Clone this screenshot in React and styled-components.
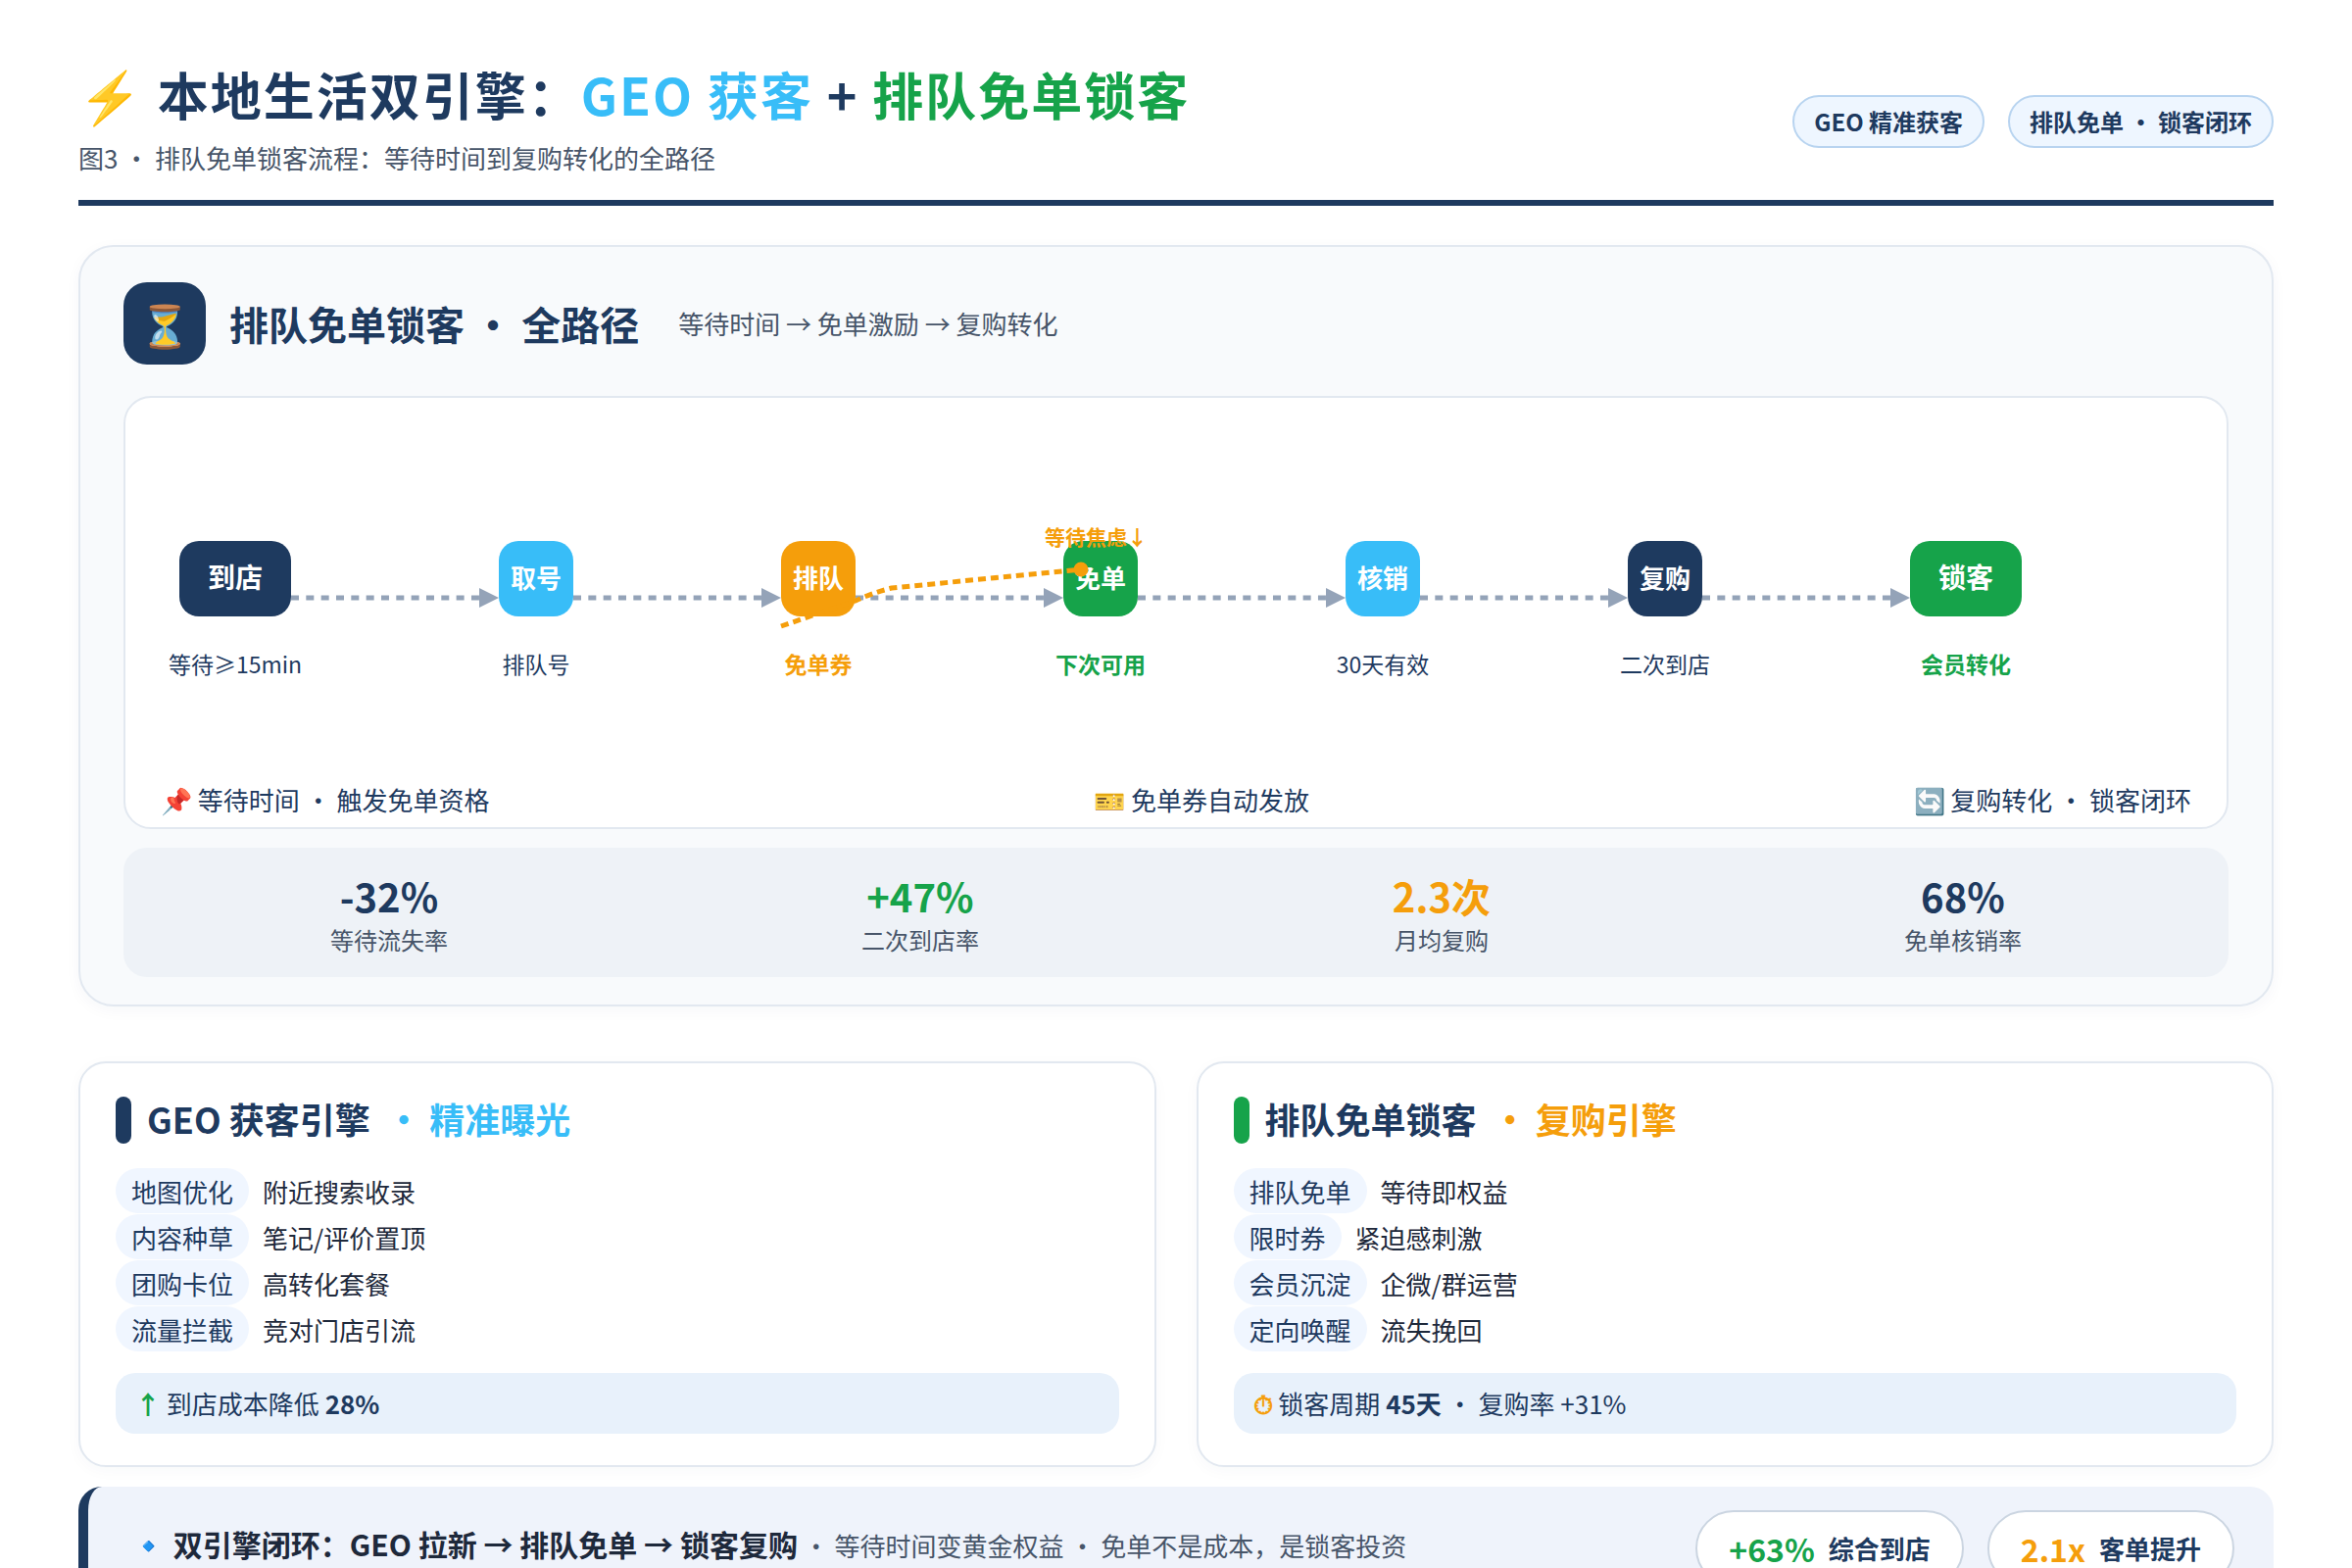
import React from 'react';
import styled, { createGlobalStyle } from 'styled-components';

const NAVY = '#1e3a5f';
const SKY = '#38bdf8';
const GREEN = '#16a34a';
const AMBER = '#f59e0b';
// full-width punctuation
const COLON = '\uFF1A';
const COMMA = '\uFF0C';

const GlobalStyle = createGlobalStyle`
  html, body {
    margin: 0;
    padding: 0;
    background: #ffffff;
  }
  body {
    font-family: "Noto Sans CJK SC", "Noto Sans", sans-serif;
    color: ${NAVY};
  }
  * { box-sizing: border-box; }
`;

const flowSteps = [
  { name: '到店', bg: NAVY, wide: true, note: '等待≥15min' },
  { name: '取号', bg: SKY, note: '排队号' },
  { name: '排队', bg: AMBER, note: '免单券', noteColor: AMBER },
  { name: '免单', bg: GREEN, note: '下次可用', noteColor: GREEN, callout: '等待焦虑↓' },
  { name: '核销', bg: SKY, note: '30天有效' },
  { name: '复购', bg: NAVY, note: '二次到店' },
  { name: '锁客', bg: GREEN, wide: true, note: '会员转化', noteColor: GREEN },
];

const stats = [
  { value: '-32%', label: '等待流失率', color: NAVY },
  { value: '+47%', label: '二次到店率', color: GREEN },
  { value: '2.3次', label: '月均复购', color: AMBER },
  { value: '68%', label: '免单核销率', color: NAVY },
];

const geoRows = [
  ['地图优化', '附近搜索收录'],
  ['内容种草', '笔记/评价置顶'],
  ['团购卡位', '高转化套餐'],
  ['流量拦截', '竞对门店引流'],
];

const lockRows = [
  ['排队免单', '等待即权益'],
  ['限时券', '紧迫感刺激'],
  ['会员沉淀', '企微/群运营'],
  ['定向唤醒', '流失挽回'],
];

const FlowArrow = () => (
  <ArrowSvg viewBox="0 0 212 20" width="212" height="20">
    <line x1="0" y1="10" x2="194" y2="10" stroke="#94a3b8" strokeWidth="5" strokeDasharray="8 7.33" />
    <polygon points="192,0 212,10 192,20" fill="#94a3b8" />
  </ArrowSvg>
);

export default function App() {
  return (
    <Page>
      <GlobalStyle />
      <Header>
        <div>
          <Title>
            <Bolt>⚡</Bolt> 本地生活双引擎{COLON}<Tint $color={SKY}>GEO 获客</Tint> + <Tint $color={GREEN}>排队免单锁客</Tint>
          </Title>
          <Subtitle>图3 · 排队免单锁客流程{COLON}等待时间到复购转化的全路径</Subtitle>
        </div>
        <HeaderTags>
          <HeaderTag>GEO 精准获客</HeaderTag>
          <HeaderTag>排队免单 · 锁客闭环</HeaderTag>
        </HeaderTags>
      </Header>

      <MainPanel>
        <PanelHead>
          <PanelIcon>⏳</PanelIcon>
          <PanelTitle>排队免单锁客 · 全路径</PanelTitle>
          <PanelHint>等待时间 → 免单激励 → 复购转化</PanelHint>
        </PanelHead>

        <FlowCard>
          <FlowRow>
            {flowSteps.map((step, i) => (
              <React.Fragment key={step.name}>
                {i > 0 && <FlowArrow />}
                <StepCol $wide={step.wide}>
                  {step.callout && <Callout>{step.callout}</Callout>}
                  <StepNode $bg={step.bg} $wide={step.wide}>{step.name}</StepNode>
                  <StepNote $color={step.noteColor}>{step.note}</StepNote>
                </StepCol>
              </React.Fragment>
            ))}
          </FlowRow>
          <FlowLegend>
            <span>📌 等待时间 · 触发免单资格</span>
            <span>🎫 免单券自动发放</span>
            <span>🔄 复购转化 · 锁客闭环</span>
          </FlowLegend>
          <WaitCurve viewBox="0 0 2144 438">
            <path
              d="M669 233 L745 207 Q762 199 782 194 L975 175"
              fill="none"
              stroke={AMBER}
              strokeWidth="5"
              strokeDasharray="8 5"
            />
            <circle cx="975" cy="175" r="7.5" fill={AMBER} />
          </WaitCurve>
        </FlowCard>

        <StatsBar>
          {stats.map(s => (
            <Stat key={s.label}>
              <StatValue $color={s.color}>{s.value}</StatValue>
              <StatLabel>{s.label}</StatLabel>
            </Stat>
          ))}
        </StatsBar>
      </MainPanel>

      <EngineGrid>
        <EngineCard>
          <EngineHead>
            <EngineBar $color={NAVY} />
            GEO 获客引擎
            <EngineAccent $color={SKY}> · 精准曝光</EngineAccent>
          </EngineHead>
          {geoRows.map(([tag, text]) => (
            <EngineRow key={tag}>
              <RowTag>{tag}</RowTag>
              <span>{text}</span>
            </EngineRow>
          ))}
          <EngineResult>
            <ResultGlyph $color={GREEN}>↑</ResultGlyph> 到店成本降低 <strong>28%</strong>
          </EngineResult>
        </EngineCard>

        <EngineCard>
          <EngineHead>
            <EngineBar $color={GREEN} />
            排队免单锁客
            <EngineAccent $color={AMBER}> · 复购引擎</EngineAccent>
          </EngineHead>
          {lockRows.map(([tag, text]) => (
            <EngineRow key={tag}>
              <RowTag>{tag}</RowTag>
              <span>{text}</span>
            </EngineRow>
          ))}
          <EngineResult>
            <ResultGlyph $color={AMBER}>⏱</ResultGlyph> 锁客周期 <strong>45天</strong> · 复购率 +31%
          </EngineResult>
        </EngineCard>
      </EngineGrid>

      <Banner>
        <BannerText>
          <BannerLead>🔹 双引擎闭环{COLON}GEO 拉新 → 排队免单 → 锁客复购</BannerLead>
          <BannerNote> · 等待时间变黄金权益 · 免单不是成本{COMMA}是锁客投资</BannerNote>
        </BannerText>
        <BannerPills>
          <BannerPill><PillValue $color={GREEN}>+63%</PillValue> 综合到店</BannerPill>
          <BannerPill><PillValue $color={AMBER}>2.1x</PillValue> 客单提升</BannerPill>
        </BannerPills>
      </Banner>
    </Page>
  );
}

const Page = styled.div`
  width: 2400px;
  padding: 62px 80px 0;
`;

const Header = styled.header`
  display: flex;
  justify-content: space-between;
  align-items: center;
  padding-bottom: 25px;
  border-bottom: 6px solid ${NAVY};
`;

const Title = styled.h1`
  margin: 0;
  font-size: 52px;
  line-height: 1.3;
  font-weight: 700;
  letter-spacing: 2px;
  color: ${NAVY};
`;

const Bolt = styled.span`
  font-weight: 400;
`;

const Tint = styled.span`
  color: ${props => props.$color};
`;

const Subtitle = styled.div`
  margin-top: 13px;
  font-size: 26px;
  line-height: 1.4;
  color: #475569;
`;

const HeaderTags = styled.div`
  display: flex;
  gap: 24px;
  margin-top: 7px;
`;

const HeaderTag = styled.span`
  height: 54px;
  display: flex;
  align-items: center;
  padding: 0 20px;
  font-size: 24px;
  font-weight: 700;
  color: ${NAVY};
  background: #eef6ff;
  border: 2px solid #b8d4f0;
  border-radius: 28px;
`;

const MainPanel = styled.section`
  margin-top: 40px;
  padding: 36px 44px 28px;
  background: #f8fafc;
  border: 2px solid #e2e8f0;
  border-radius: 36px;
  box-shadow: 0 4px 16px rgba(30, 58, 95, 0.04);
`;

const PanelHead = styled.div`
  display: flex;
  align-items: center;
  margin-bottom: 32px;
`;

const PanelIcon = styled.div`
  width: 84px;
  height: 84px;
  display: flex;
  align-items: center;
  justify-content: center;
  margin-right: 24px;
  font-size: 42px;
  background: ${NAVY};
  border-radius: 24px;
`;

const PanelTitle = styled.h2`
  margin: 0 40px 0 0;
  font-size: 40px;
  font-weight: 700;
  color: ${NAVY};
`;

const PanelHint = styled.span`
  font-size: 26px;
  color: #475569;
`;

const FlowCard = styled.div`
  position: relative;
  height: 442px;
  display: flex;
  flex-direction: column;
  justify-content: space-between;
  padding: 146px 36px 10px;
  background: #ffffff;
  border: 2px solid #e2e8f0;
  border-radius: 28px;
`;

const FlowRow = styled.div`
  display: flex;
  align-items: flex-start;
  padding-left: 19px;
`;

const ArrowSvg = styled.svg`
  flex: none;
  margin-top: 48px;
`;

const StepCol = styled.div`
  position: relative;
  flex: none;
  width: ${props => (props.$wide ? '114px' : '76px')};
  display: flex;
  flex-direction: column;
  align-items: center;
`;

const StepNode = styled.div`
  width: 100%;
  height: 77px;
  display: flex;
  align-items: center;
  justify-content: center;
  padding-bottom: 4px;
  font-size: ${props => (props.$wide ? '28px' : '26px')};
  font-weight: 700;
  color: #ffffff;
  background: ${props => props.$bg};
  border-radius: 20px;
`;

const StepNote = styled.div`
  margin-top: 32px;
  font-size: 23px;
  line-height: 1.4;
  white-space: nowrap;
  font-weight: ${props => (props.$color ? 700 : 400)};
  color: ${props => props.$color || NAVY};
`;

const Callout = styled.span`
  position: absolute;
  z-index: 2;
  left: -19px;
  top: -19px;
  font-size: 21px;
  line-height: 28px;
  font-weight: 700;
  white-space: nowrap;
  color: ${AMBER};
`;

const WaitCurve = styled.svg`
  position: absolute;
  left: 0;
  top: 0;
  width: 2144px;
  height: 438px;
  pointer-events: none;
`;

const FlowLegend = styled.div`
  display: flex;
  justify-content: space-between;
  font-size: 26px;
  line-height: 1.4;
  color: ${NAVY};
`;

const StatsBar = styled.div`
  display: flex;
  justify-content: space-around;
  margin-top: 19px;
  padding: 21px 0 21.4px;
  background: #eef2f7;
  border-radius: 24px;
`;

const Stat = styled.div`
  text-align: center;
`;

const StatValue = styled.div`
  font-size: 40px;
  line-height: 56px;
  font-weight: 700;
  color: ${props => props.$color};
`;

const StatLabel = styled.div`
  font-size: 24px;
  line-height: 1.4;
  color: #475569;
`;

const EngineGrid = styled.div`
  display: grid;
  grid-template-columns: 1fr 1fr;
  gap: 41px;
  margin-top: 56px;
`;

const EngineCard = styled.article`
  height: 414px;
  padding: 34px 36px 0;
  background: #ffffff;
  border: 2px solid #e2e8f0;
  border-radius: 28px;
  box-shadow: 0 4px 16px rgba(30, 58, 95, 0.03);
`;

const EngineHead = styled.h3`
  display: flex;
  align-items: flex-start;
  margin: 0 0 25px;
  height: 48px;
  font-size: 36px;
  line-height: 44px;
  font-weight: 700;
  color: ${NAVY};
  white-space: pre;
`;

const EngineBar = styled.i`
  width: 16px;
  height: 48px;
  margin-right: 16px;
  border-radius: 8px;
  background: ${props => props.$color};
`;

const EngineAccent = styled.span`
  margin-left: 8px;
  color: ${props => props.$color};
`;

const EngineRow = styled.div`
  display: flex;
  align-items: center;
  gap: 14px;
  height: 47px;
  font-size: 26px;
  color: #1e293b;
`;

const RowTag = styled.span`
  height: 46px;
  display: flex;
  align-items: center;
  padding: 0 16px;
  color: ${NAVY};
  background: #f0f6ff;
  border-radius: 23px;
`;

const EngineResult = styled.div`
  display: flex;
  align-items: center;
  white-space: pre;
  height: 62px;
  margin-top: 21px;
  padding: 0 20px 1px;
  font-size: 26px;
  color: ${NAVY};
  background: #e8f1fb;
  border-radius: 20px;

  strong { font-weight: 700; }
`;

const ResultGlyph = styled.span`
  font-weight: 700;
  color: ${props => props.$color};
`;

const Banner = styled.section`
  display: flex;
  align-items: flex-start;
  justify-content: space-between;
  margin-top: 20px;
  padding: 24px 40px 24px 43px;
  background: #eff3fb;
  border-left: 10px solid ${NAVY};
  border-radius: 24px;
`;

const BannerText = styled.div`
  padding-top: 12px;
  white-space: pre;
`;

const BannerLead = styled.strong`
  font-size: 30px;
  font-weight: 700;
  color: #1e293b;
`;

const BannerNote = styled.span`
  font-size: 26px;
  color: #475569;
`;

const BannerPills = styled.div`
  display: flex;
  gap: 24px;
`;

const BannerPill = styled.div`
  display: flex;
  align-items: center;
  gap: 14px;
  height: 78px;
  padding: 0 32px;
  font-size: 26px;
  font-weight: 700;
  color: ${NAVY};
  background: #ffffff;
  border: 2px solid #cbd5e1;
  border-radius: 40px;
`;

const PillValue = styled.span`
  font-size: 32px;
  color: ${props => props.$color};
`;
